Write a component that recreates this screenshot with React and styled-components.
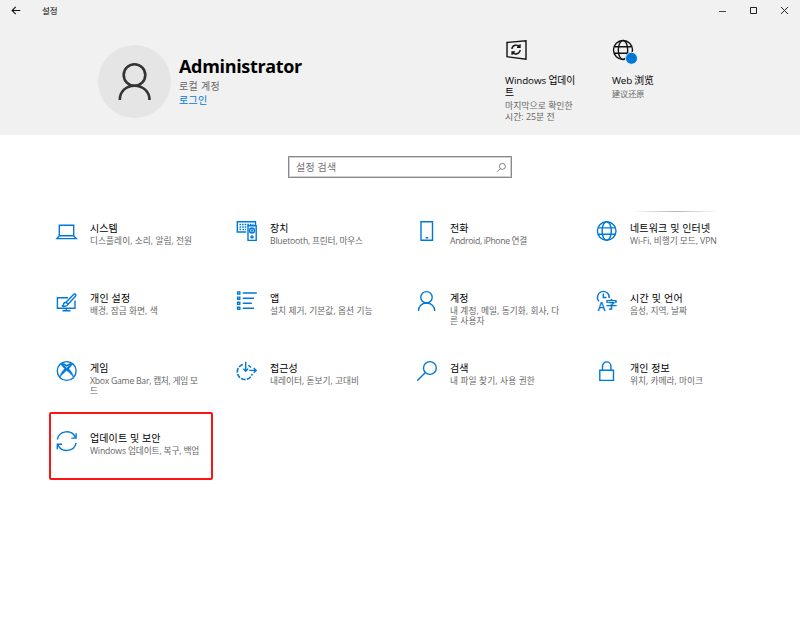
import styled, { createGlobalStyle, css } from 'styled-components';

const GlobalStyle = createGlobalStyle`
  body {
    margin: 0;
    background-color: #ffffff;
    font-family: "Open Sans", "Noto Sans CJK KR", sans-serif;
  }
`;

const Window = styled.div`
  width: 800px;
  height: 621px;
  overflow: hidden;
  background-color: #ffffff;
  color: #000000;
`;

const Header = styled.header`
  height: 135px;
  background-color: #f1f1f1;
`;

const TitleBar = styled.div`
  display: flex;
  align-items: center;
  height: 21px;
  box-sizing: border-box;
  padding: 0 10px 0 11px;
`;

const WindowTitle = styled.span`
  margin-left: 20px;
  font-size: 8.5px;
  line-height: 12px;
`;

const WindowButtons = styled.div`
  display: flex;
  gap: 20px;
  margin-left: auto;
`;

const HeaderBody = styled.div`
  display: flex;
  align-items: flex-start;
  padding-left: 98px;
`;

const Avatar = styled.div`
  display: flex;
  width: 73px;
  height: 73px;
  margin-top: 23.5px;
  border-radius: 50%;
  background-color: #e5e5e5;
`;

const Account = styled.div`
  width: 326px;
  padding: 33px 0 0 8px;
  box-sizing: border-box;
`;

const AccountName = styled.h1`
  margin: 0 0 1px;
  font-size: 18px;
  font-weight: 700;
  line-height: 24px;
  letter-spacing: -0.33px;
`;

const AccountLine = styled.div`
  font-size: 10px;
  line-height: 14px;
  color: ${(props) => props.$color};
  letter-spacing: 0.3px;
`;

const Status = styled.div`
  width: ${(props) => props.$width}px;
  padding-top: 18px;
  margin-left: 8px;
  white-space: nowrap;
`;

const StatusTitle = styled.div`
  margin-top: 14px;
  font-size: 9.8px;
  line-height: 12px;
  letter-spacing: ${(props) => props.$spacing || 0}px;
`;

const StatusText = styled.div`
  margin-top: 1px;
  font-size: ${(props) => props.$size || 8.9}px;
  line-height: 11px;
  color: #666666;
`;

const SearchBox = styled.label`
  display: flex;
  align-items: center;
  justify-content: space-between;
  box-sizing: border-box;
  width: 224px;
  height: 22px;
  margin: 21px auto 0 288px;
  padding: 0 4px 0 7px;
  border: 1px solid #8a8a8a;
  box-shadow: inset 0 0 0 1px #d0d0d0;
`;

const SearchInput = styled.input`
  width: 150px;
  padding: 0;
  border: none;
  outline: none;
  background: none;
  font-family: inherit;
  font-size: 10px;
  line-height: 14px;
  letter-spacing: 0.2px;

  &::placeholder {
    color: #707070;
    opacity: 1;
  }
`;

const Grid = styled.main`
  display: grid;
  grid-template-columns: repeat(4, 180px);
  grid-auto-rows: 70px;
  padding: 42px 0 0 56px;
`;

const Tile = styled.div`
  position: relative;
  display: flex;
  align-items: flex-start;
  gap: 12px;

  ${(props) => props.$highlight && css`
    &::after {
      content: "";
      position: absolute;
      left: -7px;
      top: -18px;
      width: 164px;
      height: 68px;
      box-sizing: border-box;
      border: 2px solid #fb1414;
      border-radius: 2px;
    }
  `}

  ${(props) => props.$topLine && css`
    &::before {
      content: "";
      position: absolute;
      left: 36px;
      top: -9px;
      width: 87px;
      height: 1px;
      background: linear-gradient(to right, #ffffff, #b4b4b4 50%, #ffffff);
    }
  `}
`;

const TileText = styled.div`
  padding-top: 1px;
  white-space: nowrap;
`;

const TileTitle = styled.div`
  margin-bottom: 1px;
  font-size: 10px;
  font-weight: 400;
  line-height: 14px;
  letter-spacing: ${(props) => props.$spacing || 0}px;
`;

const TileDescription = styled.div`
  font-size: 8.7px;
  line-height: 10.4px;
  color: #666666;
  letter-spacing: ${(props) => props.$spacing || 0}px;
`;

const Icon = styled.svg`
  display: block;
  flex: none;
  width: 22px;
  height: 22px;
  fill: none;
  stroke: ${(props) => props.$color || '#0078d7'};
  stroke-width: ${(props) => props.$stroke || 1.4};
  overflow: visible;
`;

const SmallIcon = styled(Icon)`
  width: 11px;
  height: 11px;
`;

const icons = {
  system: <path d="M3.3 5.2h14.4v10.5H3.3zM3 16.2L.9 18.6h19.4L18 16.2" />,
  devices: (
    <>
      <path d="M10 12H1.3V1.7h18.2V5" />
      <path d="M3.5 4.5h14M3.5 7h7M3.5 9.5h1.6M6.5 9.5H10" strokeDasharray="1.6 1" />
      <path d="M12 5.8h8.2v14.6H12z" />
      <circle cx="16" cy="10.5" r="2.5" />
      <circle cx="16" cy="10.5" r=".5" />
      <circle cx="16" cy="17" r="1.1" />
    </>
  ),
  phone: <path d="M5 1.7h11.5v18.6H5zM9.6 17.7h2.6" />,
  network: (
    <>
      <circle cx="10.7" cy="11" r="9.3" />
      <ellipse cx="10.7" cy="11" rx="4.6" ry="9.3" />
      <path d="M2.2 7.9h17M2.2 14.3h17" />
    </>
  ),
  personal: (
    <>
      <path d="M12 7.7H1.4v10.6H19V10.5M10.2 18.3V20.6M6.5 20.8h8" />
      <path d="M10 12.2L17.6 4.4c1.3-1.1 3 .4 1.9 1.8L12 14.2zM10 12.2c-2.1 0-2.4 1.3-2.6 2.5-.2.8-.8 1-1.5 1.1 2.5.9 5.6.5 6.1-1.6z" />
    </>
  ),
  apps: (
    <>
      <path d="M1.6 1.9h2.2v2.2H1.6zM1.6 7.1h2.2v2.2H1.6zM1.6 12.2h2.2v2.2H1.6zM1.6 17.2h2.2v2.2H1.6z" />
      <path d="M6.8 3H20.8M6.8 8.2H18M6.8 13.3h9M6.8 18.3H18" />
    </>
  ),
  accounts: (
    <>
      <circle cx="10.5" cy="7.3" r="5.7" />
      <path d="M2.5 21c0-4.8 3.3-8 8-8s8.2 3.2 8.2 8" />
    </>
  ),
  time: (
    <>
      <path d="M3 11.3A5.9 5.9 0 1 1 13.2 8M7.3 3.5v4h3.2" />
      <text x="1.5" y="21" fontSize="12" fontWeight="600" fill="#0078d7" stroke="none">A</text>
      <text x="9.5" y="19" fontSize="11.8" fontWeight="700" fill="#0078d7" stroke="none">字</text>
    </>
  ),
  gaming: (
    <>
      <circle cx="10.7" cy="11" r="9.4" />
      <path
        d="M4.6 4.2C7 3.2 9 4.6 10.7 5.7 12.4 4.6 14.4 3.2 16.8 4.2"
        strokeWidth="1.6"
      />
      <path
        d="M5.2 4.3C7.2 4.5 9.2 6.4 10.7 7.9 12.2 6.4 14.2 4.5 16.2 4.3 15.6 5.8 14 7.4 12.8 8.7 15.5 11.5 17.6 14.7 17.5 17.6 15.8 14.9 13.2 12.3 10.7 10.5 8.2 12.3 5.6 14.9 3.9 17.6 3.8 14.7 5.9 11.5 8.6 8.7 7.4 7.4 5.8 5.8 5.2 4.3z"
        fill="#0078d7"
        strokeWidth=".4"
      />
    </>
  ),
  access: (
    <>
      <path d="M6.9 4.5a7.6 7.6 0 1 0 9.3 9.4" strokeDasharray="4.6 1.3" strokeWidth="1.6" />
      <path d="M12.3 5.3a7.6 7.6 0 0 1 2.6 2.3" />
      <path d="M9.7 1.8v9.3M7.3 8.8l2.4 2.5 2.4-2.5M13.3 10.4h6.7M17.7 8l2.5 2.4-2.5 2.4" />
    </>
  ),
  search: <path d="M20.3 8a6.4 6.4 0 1 1-12.8 0a6.4 6.4 0 1 1 12.8 0M9.4 12.6L1.2 20.8" />,
  privacy: <path d="M3.8 10.2h13.7v10.2H3.8zM6.5 10.2V6.1a4.2 4.2 0 0 1 8.4 0v4.1" />,
  update: (
    <>
      <path d="M1.3 9.5A9.6 9.6 0 0 1 19.5 7.6M20.1 12.8A9.6 9.6 0 0 1 1.9 14.7" />
      <path d="M20.1 3.3v4.8h-4.8M1.3 19.2v-4.9h4.8" />
    </>
  ),
};

const tiles = [
  { icon: 'system', title: '시스템', text: ['디스플레이, 소리, 알림, 전원'], textSpacing: 0.04 },
  { icon: 'devices', title: '장치', text: ['Bluetooth, 프린터, 마우스'], textSpacing: -0.22 },
  { icon: 'phone', title: '전화', text: ['Android, iPhone 연결'], textSpacing: -0.36 },
  { icon: 'network', title: '네트워크 및 인터넷', titleSpacing: 0.15, text: ['Wi-Fi, 비행기 모드, VPN'], textSpacing: -0.06, topLine: true },
  { icon: 'personal', title: '개인 설정', titleSpacing: 0.2, text: ['배경, 잠금 화면, 색'], textSpacing: 0.04 },
  { icon: 'apps', title: '앱', text: ['설치 제거, 기본값, 옵션 기능'], textSpacing: 0.07 },
  { icon: 'accounts', title: '계정', text: ['내 계정, 메일, 동기화, 회사, 다', '른 사용자'], textSpacing: 0.05 },
  { icon: 'time', title: '시간 및 언어', titleSpacing: 0.25, text: ['음성, 지역, 날짜'] },
  { icon: 'gaming', title: '게임', text: ['Xbox Game Bar, 캡처, 게임 모', '드'], textSpacing: -0.27 },
  { icon: 'access', title: '접근성', text: ['내레이터, 돋보기, 고대비'] },
  { icon: 'search', title: '검색', text: ['내 파일 찾기, 사용 권한'], textSpacing: 0.12 },
  { icon: 'privacy', title: '개인 정보', titleSpacing: 0.1, text: ['위치, 카메라, 마이크'] },
  { icon: 'update', title: '업데이트 및 보안', titleSpacing: 0.1, text: ['Windows 업데이트, 복구, 백업'], textSpacing: -0.15, highlight: true },
];

const App = () => {
  return (
    <Window>
      <GlobalStyle />
      <Header>
        <TitleBar>
          <SmallIcon $color="#111" $stroke={1.1} viewBox="0 0 11 11">
            <path d="M9.3 5.5H1.3M4.7 1.9L1.1 5.5l3.6 3.6" />
          </SmallIcon>
          <WindowTitle>설정</WindowTitle>
          <WindowButtons>
            <SmallIcon $color="#444" $stroke={1} viewBox="0 0 11 11"><path d="M2 6.5h7" /></SmallIcon>
            <SmallIcon $color="#222" $stroke={1} viewBox="0 0 11 11"><path d="M2.5 2.5h6v6h-6z" /></SmallIcon>
            <SmallIcon $color="#222" $stroke={1} viewBox="0 0 11 11"><path d="M2 2l7 7M9 2l-7 7" /></SmallIcon>
          </WindowButtons>
        </TitleBar>
        <HeaderBody>
          <Avatar>
            <svg width="73" height="73" fill="none" stroke="#333" strokeWidth="2.6">
              <circle cx="36.5" cy="30" r="10.8" />
              <path d="M21.8 55c0-8.5 6.2-14.3 14.7-14.3S51.5 46.5 51.5 55" />
            </svg>
          </Avatar>
          <Account>
            <AccountName>Administrator</AccountName>
            <AccountLine $color="#666666">로컬 계정</AccountLine>
            <AccountLine $color="#0078d7">로그인</AccountLine>
          </Account>
          <Status $width={99}>
            <Icon $color="#111" viewBox="0 0 22 22">
              <path d="M2 3.5L21 1.7v18.6L2 17.7z" />
              <path d="M6.9 10a4.3 4.3 0 0 1 7.8-2M15.2 11a4.3 4.3 0 0 1-7.8 2.1M15 5.3v2.9h-3M7.1 15.8v-2.9h3" />
            </Icon>
            <StatusTitle $spacing={-0.1}>Windows 업데이<br />트</StatusTitle>
            <StatusText>마지막으로 확인한<br />시간: 25분 전</StatusText>
          </Status>
          <Status $width={80}>
            <Icon $color="#111" viewBox="0 0 22 22">
              <circle cx="11" cy="11" r="9.5" />
              <ellipse cx="11" cy="11" rx="4.7" ry="9.5" />
              <path d="M2.2 7.7h17.6M2.2 14.3h17.6" />
              <circle cx="19.5" cy="19.3" r="6" fill="#0078d7" stroke="#f1f1f1" strokeWidth="1" />
            </Icon>
            <StatusTitle $spacing={-0.2}>Web 浏览</StatusTitle>
            <StatusText $size={8.1}>建议还原</StatusText>
          </Status>
        </HeaderBody>
      </Header>
      <SearchBox>
        <SearchInput type="text" placeholder="설정 검색" />
        <SmallIcon $color="#707070" $stroke={0.9} viewBox="0 0 11 11">
          <path d="M9.4 4.4a3 3 0 1 1-6 0a3 3 0 1 1 6 0M4.3 6.6L1.1 9.8" />
        </SmallIcon>
      </SearchBox>
      <Grid>
        {tiles.map((tile) => (
          <Tile key={tile.icon} $highlight={tile.highlight} $topLine={tile.topLine}>
            <Icon viewBox="0 0 22 22">{icons[tile.icon]}</Icon>
            <TileText>
              <TileTitle $spacing={tile.titleSpacing}>{tile.title}</TileTitle>
              {tile.text.map((line) => (
                <TileDescription key={line} $spacing={tile.textSpacing}>{line}</TileDescription>
              ))}
            </TileText>
          </Tile>
        ))}
      </Grid>
    </Window>
  );
};

export default App;
